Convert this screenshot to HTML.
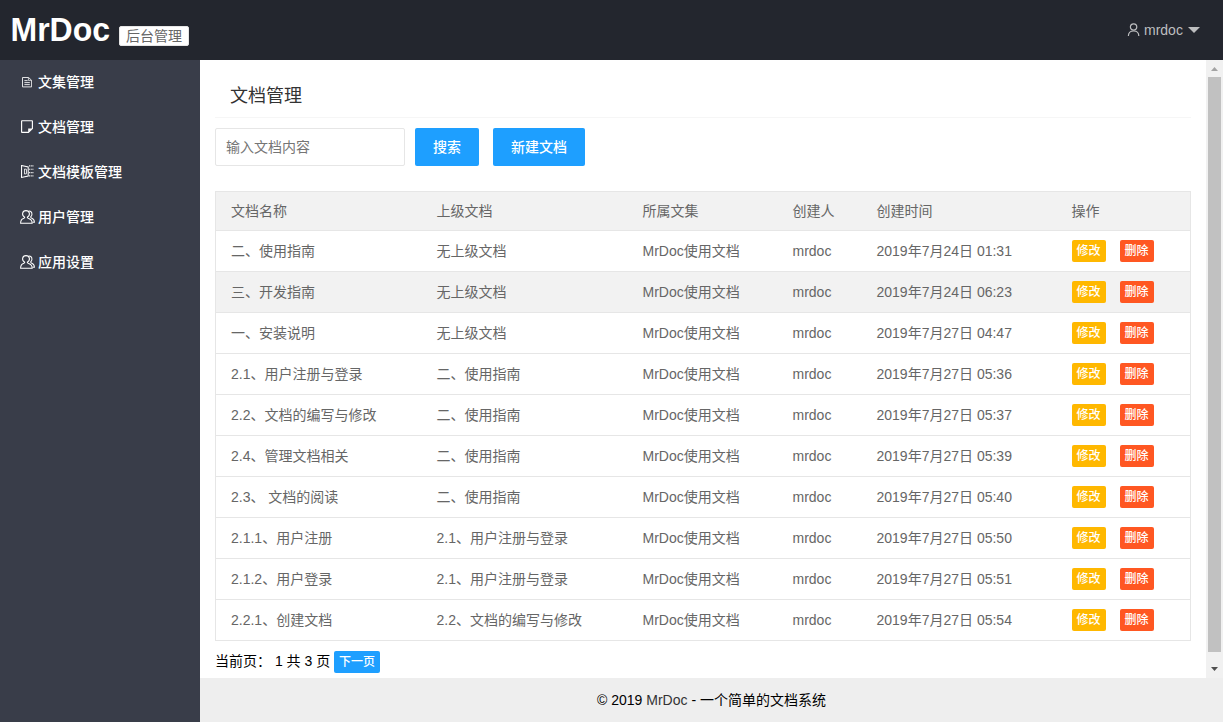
<!DOCTYPE html>
<html lang="zh-CN">
<head>
<meta charset="utf-8">
<title>文档管理 - MrDoc 后台管理</title>
<style>
*{box-sizing:border-box;margin:0;padding:0}
html,body{width:1223px;height:722px;overflow:hidden;background:#fff}
body{font-family:"Liberation Sans","Noto Sans CJK SC",sans-serif;font-size:14px;line-height:24px;color:#000;position:relative}
a{text-decoration:none;color:#333}
/* header */
.header{position:absolute;left:0;top:0;width:1223px;height:60px;background:#23262E}
.logo{position:absolute;left:10.5px;top:0;transform:scaleY(1.035);transform-origin:0 41px;height:60px;line-height:60px;font-size:32px;font-weight:bold;color:#fff;white-space:nowrap}
.logo b{font-weight:bold}
.badge{position:absolute;left:119px;top:26px;width:70px;height:20px;line-height:18px;border:1px solid #e6e6e6;background:#fff;color:#666;font-size:14px;font-weight:normal;border-radius:2px;text-align:center}
.user{position:absolute;left:1127px;top:0;height:60px;line-height:60px;color:#bdbec0;font-size:14px;white-space:nowrap}
.user svg{position:absolute;left:0;top:23px}
.user span{position:absolute;left:17px;top:0}
.user i{position:absolute;left:61px;top:27px;width:0;height:0;border:6px solid transparent;border-top-color:#bdbec0;border-bottom:0}
/* side */
.side{position:absolute;left:0;top:60px;width:200px;height:662px;background:#393D49}
.side ul{list-style:none}
.side li{position:relative;height:45px;line-height:45px;color:#fff;font-size:14px;white-space:nowrap}
.side li span{position:absolute;left:38px;top:0;font-weight:500}
.side li svg{position:absolute}
/* body */
.main{position:absolute;left:200px;top:60px;width:1006px;height:618px;background:#fff;overflow:hidden}
.title{position:absolute;left:15px;top:15px;width:976px;height:43px;line-height:42px;padding:0 15px;border-bottom:1px solid #f6f6f6;font-size:18px;color:#333}
.search{position:absolute;left:15px;top:68px;height:38px}
.inp{position:absolute;left:0;top:0;width:190px;height:38px;line-height:36px;border:1px solid #e6e6e6;border-radius:2px;padding-left:10px;color:#757575;font-size:14px;background:#fff}
.btn{position:absolute;top:0;height:38px;line-height:38px;background:#1E9FFF;color:#fff;font-size:14px;text-align:center;border-radius:2px;white-space:nowrap;font-weight:500}
table{position:absolute;left:15px;top:131px;width:976px;border-collapse:collapse;border-spacing:0;table-layout:fixed;color:#666;font-size:14px;border:1px solid #e6e6e6}
th,td{text-align:left;font-weight:normal;padding:0 15px;border-bottom:1px solid #e6e6e6;line-height:20px;white-space:nowrap;overflow:hidden;vertical-align:middle}
th{height:39px;background:#f2f2f2}
td{height:41px}
tr.hv td{background:#f2f2f2}
.xs{display:inline-block;height:22px;line-height:22px;padding:0 5px;font-size:12px;color:#fff;border-radius:2px;vertical-align:middle;font-weight:500}
.warm{background:#FFB800}
.danger{background:#FF5722;margin-left:14px}
.pager{position:absolute;left:15px;top:589px;height:24px;line-height:24px;font-size:14px;color:#000;white-space:nowrap}
.pager .xs{background:#1E9FFF;position:absolute;left:119px;top:2px}
/* scrollbar */
.sb{position:absolute;left:1206px;top:60px;width:17px;height:618px;background:#f1f1f1}
.sb .thumb{position:absolute;left:2px;top:17px;width:13px;height:575px;background:#c1c1c1}
.sb svg{position:absolute;left:5px}
.sb .up{top:7px}
.sb .dn{top:607px}
/* footer */
.footer{position:absolute;left:200px;top:678px;width:1023px;height:44px;line-height:44px;background:#eee;text-align:center;font-size:14px;color:#000}
</style>
</head>
<body>
<div class="header">
  <div class="logo">MrDoc</div>
  <div class="badge">后台管理</div>
  <div class="user">
    <svg width="13" height="13" viewBox="0 0 13 13" fill="none" stroke="#bdbec0" stroke-width="1.2"><circle cx="6.6" cy="4" r="3.2"/><path d="M1.4 13 C1.4 9.8 3.4 8 6.6 8 C9.8 8 11.8 9.8 11.8 13"/></svg>
    <span>mrdoc</span><i></i>
  </div>
</div>

<div class="side">
  <ul>
    <li><svg style="left:22px;top:17px" width="10" height="11" viewBox="0 0 10 11" fill="none" stroke="#fff" stroke-width="0.85"><path d="M0.5 0.5 H6.6 L9.6 3.3 V9.9 H0.5 Z"/><path d="M6.4 0.7 V3.4 H9.4" stroke-width="0.7"/><path d="M2.4 3.6 H5.6 M2.4 5.6 H7.8 M2.4 7.6 H7.8"/></svg><span>文集管理</span></li>
    <li><svg style="left:21px;top:15px" width="12" height="13" viewBox="0 0 12 13" fill="none" stroke="#fff" stroke-width="1.15"><path d="M1 0.7 H11 Q11.4 0.7 11.4 1.1 V8.6 L7.4 12.4 H1 Q0.6 12.4 0.6 12 V1.1 Q0.6 0.7 1 0.7 Z"/><path d="M7.2 12.2 V8.4 H11.2 Z" fill="#fff" stroke="none"/></svg><span>文档管理</span></li>
    <li><svg style="left:21px;top:15px" width="13" height="13" viewBox="0 0 13 13" fill="none" stroke="#fff" stroke-width="1.05"><path d="M0.55 0.6 L7.2 2 V11 L0.55 12.4 Z"/><path d="M3.5 4 L5.5 4.3 V8.7 L3.5 9 Z" stroke-width="0.8"/><path d="M8.1 0.9 H12.4 M8.1 4.2 H12.4 M8.1 7.6 H12.4 M8.1 10.9 H12.4" stroke-width="1.1" stroke-dasharray="1 0.65"/></svg><span>文档模板管理</span></li>
    <li><svg style="left:20px;top:15px" width="15" height="14" viewBox="0 0 15 14" fill="none" stroke="#fff" stroke-width="1.05"><path d="M4.7 7.2 C2.9 6.2 2.4 4.6 2.6 3.4 C2.9 1.6 4.3 0.6 6 0.6 C7.7 0.6 9.1 1.6 9.4 3.4 C9.6 4.6 9.1 6.2 7.3 7.2 C7.3 7.9 7.6 8.2 8.6 8.5 C10.8 9.2 12.2 10.6 12.2 13.3 H0.6 C0.6 10.6 1.4 9.2 3.4 8.5 C4.4 8.2 4.7 7.9 4.7 7.2 Z"/><path d="M8.8 1.1 C11.8 0.8 13.2 4.6 10.7 7 C10.7 7.8 11 8 11.8 8.3 C13.6 9 14.4 10.2 14.4 12.2 H12.6"/></svg><span>用户管理</span></li>
    <li><svg style="left:20px;top:15px" width="15" height="14" viewBox="0 0 15 14" fill="none" stroke="#fff" stroke-width="1.05"><path d="M4.7 7.2 C2.9 6.2 2.4 4.6 2.6 3.4 C2.9 1.6 4.3 0.6 6 0.6 C7.7 0.6 9.1 1.6 9.4 3.4 C9.6 4.6 9.1 6.2 7.3 7.2 C7.3 7.9 7.6 8.2 8.6 8.5 C10.8 9.2 12.2 10.6 12.2 13.3 H0.6 C0.6 10.6 1.4 9.2 3.4 8.5 C4.4 8.2 4.7 7.9 4.7 7.2 Z"/><path d="M8.8 1.1 C11.8 0.8 13.2 4.6 10.7 7 C10.7 7.8 11 8 11.8 8.3 C13.6 9 14.4 10.2 14.4 12.2 H12.6"/></svg><span>应用设置</span></li>
  </ul>
</div>

<div class="main">
  <div class="title">文档管理</div>
  <div class="search">
    <div class="inp">输入文档内容</div>
    <div class="btn" style="left:200px;width:64px">搜索</div>
    <div class="btn" style="left:278px;width:92px">新建文档</div>
  </div>
  <table>
    <colgroup><col style="width:206px"><col style="width:206px"><col style="width:150px"><col style="width:84px"><col style="width:195px"><col></colgroup>
    <thead>
      <tr><th>文档名称</th><th>上级文档</th><th>所属文集</th><th>创建人</th><th>创建时间</th><th>操作</th></tr>
    </thead>
    <tbody>
      <tr><td>二、使用指南</td><td>无上级文档</td><td>MrDoc使用文档</td><td>mrdoc</td><td>2019年7月24日 01:31</td><td><a class="xs warm">修改</a><a class="xs danger">删除</a></td></tr>
      <tr class="hv"><td>三、开发指南</td><td>无上级文档</td><td>MrDoc使用文档</td><td>mrdoc</td><td>2019年7月24日 06:23</td><td><a class="xs warm">修改</a><a class="xs danger">删除</a></td></tr>
      <tr><td>一、安装说明</td><td>无上级文档</td><td>MrDoc使用文档</td><td>mrdoc</td><td>2019年7月27日 04:47</td><td><a class="xs warm">修改</a><a class="xs danger">删除</a></td></tr>
      <tr><td>2.1、用户注册与登录</td><td>二、使用指南</td><td>MrDoc使用文档</td><td>mrdoc</td><td>2019年7月27日 05:36</td><td><a class="xs warm">修改</a><a class="xs danger">删除</a></td></tr>
      <tr><td>2.2、文档的编写与修改</td><td>二、使用指南</td><td>MrDoc使用文档</td><td>mrdoc</td><td>2019年7月27日 05:37</td><td><a class="xs warm">修改</a><a class="xs danger">删除</a></td></tr>
      <tr><td>2.4、管理文档相关</td><td>二、使用指南</td><td>MrDoc使用文档</td><td>mrdoc</td><td>2019年7月27日 05:39</td><td><a class="xs warm">修改</a><a class="xs danger">删除</a></td></tr>
      <tr><td>2.3、 文档的阅读</td><td>二、使用指南</td><td>MrDoc使用文档</td><td>mrdoc</td><td>2019年7月27日 05:40</td><td><a class="xs warm">修改</a><a class="xs danger">删除</a></td></tr>
      <tr><td>2.1.1、用户注册</td><td>2.1、用户注册与登录</td><td>MrDoc使用文档</td><td>mrdoc</td><td>2019年7月27日 05:50</td><td><a class="xs warm">修改</a><a class="xs danger">删除</a></td></tr>
      <tr><td>2.1.2、用户登录</td><td>2.1、用户注册与登录</td><td>MrDoc使用文档</td><td>mrdoc</td><td>2019年7月27日 05:51</td><td><a class="xs warm">修改</a><a class="xs danger">删除</a></td></tr>
      <tr><td>2.2.1、创建文档</td><td>2.2、文档的编写与修改</td><td>MrDoc使用文档</td><td>mrdoc</td><td>2019年7月27日 05:54</td><td><a class="xs warm">修改</a><a class="xs danger">删除</a></td></tr>
    </tbody>
  </table>
  <div class="pager">当前页： 1 共 3 页 <a class="xs">下一页</a></div>
</div>

<div class="sb"><svg class="up" width="7" height="4" viewBox="0 0 7 4"><path d="M0 4 L3.5 0 L7 4 Z" fill="#a3a3a3"/></svg><div class="thumb"></div><svg class="dn" width="7" height="4" viewBox="0 0 7 4"><path d="M0 0 L3.5 4 L7 0 Z" fill="#505050"/></svg></div>

<div class="footer">© 2019 <a>MrDoc</a> - 一个简单的文档系统</div>
</body>
</html>
